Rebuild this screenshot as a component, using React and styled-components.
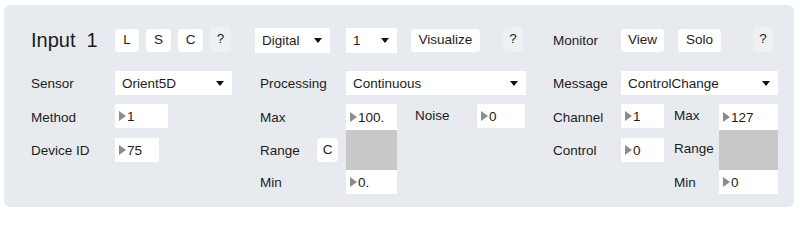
import React from "react";
import styled, { createGlobalStyle } from "styled-components";

const GlobalStyle = createGlobalStyle`
  body {
    margin: 0;
    background: #ffffff;
    font-family: "Liberation Sans", Arial, sans-serif;
  }
`;

const App = () => {
  return (
    <>
      <GlobalStyle />
      <Panel>
        <Column $width={201} $gap={28}>
          <Header>
            <Title $width={84}>
              Input<Num>1</Num>
            </Title>
            <Button $w={24}>L</Button>
            <Button $w={25} $ml={7}>S</Button>
            <Button $w={25} $ml={7}>C</Button>
            <Help $ml={7} $w={21}>?</Help>
          </Header>
          <FieldRow>
            <Label $width={84}>Sensor</Label>
            <Dropdown $w={117}>Orient5D</Dropdown>
          </FieldRow>
          <Body $cols="84px 53px">
            <Label>Method</Label>
            <NumberBox $w={53}>1</NumberBox>
            <Label>Device ID</Label>
            <NumberBox $w={44} $center>75</NumberBox>
          </Body>
        </Column>

        <Column $width={266} $gap={27}>
          <Header $shift={-5}>
            <Dropdown $w={75} $h={25}>Digital</Dropdown>
            <Dropdown $w={51} $h={25} $ml={16}>1</Dropdown>
            <Button $w={69} $ml={14}>Visualize</Button>
            <Help $w={20} $ml={23}>?</Help>
          </Header>
          <FieldRow>
            <Label $width={86}>Processing</Label>
            <Dropdown $w={180}>Continuous</Dropdown>
          </FieldRow>
          <Body $cols="57px 29px 51px 18px 62px 48px">
            <Label $col={1}>Max</Label>
            <NumberBox $col={3} $h={26}>100.</NumberBox>
            <Label $col={5} $up>Noise</Label>
            <NumberBox $col={6}>0</NumberBox>
            <Label $col={1}>Range</Label>
            <Button $col={2} $w={21} $h={24}>C</Button>
            <RangeFill $col={3} />
            <Label $col={1}>Min</Label>
            <NumberBox $col={3}>0.</NumberBox>
          </Body>
        </Column>

        <Column $width={225}>
          <Header>
            <Label $width={68}>Monitor</Label>
            <Button $w={43}>View</Button>
            <Button $w={43} $ml={14}>Solo</Button>
            <Help $w={20} $ml={32}>?</Help>
          </Header>
          <FieldRow>
            <Label $width={68}>Message</Label>
            <Dropdown $w={157}>ControlChange</Dropdown>
          </FieldRow>
          <Body $cols="68px 43px 10px 45px 59px">
            <Label $col={1}>Channel</Label>
            <NumberBox $col={2}>1</NumberBox>
            <Label $col={4} $up>Max</Label>
            <NumberBox $col={5} $h={26}>127</NumberBox>
            <Label $col={1}>Control</Label>
            <NumberBox $col={2} $center>0</NumberBox>
            <Label $col={4} $up>Range</Label>
            <RangeFill $col={5} />
            <Label $col={4}>Min</Label>
            <NumberBox $col={5}>0</NumberBox>
          </Body>
        </Column>
      </Panel>
    </>
  );
};

export default App;

const Panel = styled.div`
  box-sizing: border-box;
  display: flex;
  align-items: flex-start;
  width: 790px;
  height: 202px;
  margin: 5px 0 0 4px;
  padding: 23px 0 0 27px;
  background: #e7ebef;
  border-radius: 6px;
  color: #1c1c1c;
  font-size: 13.5px;
`;

const Column = styled.div`
  display: flex;
  flex-direction: column;
  width: ${(p) => p.$width}px;
  margin-right: ${(p) => p.$gap || 0}px;
`;

const Header = styled.div`
  display: flex;
  align-items: center;
  height: 24px;
  margin: 0 0 19px ${(p) => p.$shift || 0}px;
`;

const Title = styled.div`
  width: ${(p) => p.$width}px;
  font-size: 20px;
  line-height: 24px;
  color: #1a1a1a;
`;

const Num = styled.span`
  margin-left: 11px;
`;

const Button = styled.div`
  box-sizing: border-box;
  display: flex;
  align-items: center;
  justify-content: center;
  grid-column: ${(p) => p.$col || "auto"};
  align-self: center;
  width: ${(p) => p.$w}px;
  height: ${(p) => p.$h || 23}px;
  margin-left: ${(p) => p.$ml || 0}px;
  background: #ffffff;
  border-radius: 4px;
  line-height: 1;
`;

const Help = styled(Button)`
  height: 25px;
  margin-top: -2px;
  background: #eef1f4;
`;

const Label = styled.div`
  grid-column: ${(p) => p.$col || "auto"};
  align-self: center;
  width: ${(p) => (p.$width ? `${p.$width}px` : "auto")};
  margin-top: ${(p) => (p.$up ? "-4px" : "0")};
  flex-shrink: 0;
  white-space: nowrap;
`;

const FieldRow = styled.div`
  display: flex;
  align-items: center;
  height: 24px;
  margin-bottom: 9px;
`;

const Dropdown = styled.div`
  box-sizing: border-box;
  display: flex;
  align-items: center;
  justify-content: space-between;
  width: ${(p) => p.$w}px;
  height: ${(p) => p.$h || 24}px;
  margin-left: ${(p) => p.$ml || 0}px;
  padding: 0 8px 0 7px;
  background: #ffffff;
  white-space: nowrap;

  &::after {
    content: "";
    border-top: 5px solid #111111;
    border-left: 4.5px solid transparent;
    border-right: 4.5px solid transparent;
  }
`;

const Body = styled.div`
  display: grid;
  grid-template-columns: ${(p) => p.$cols};
  grid-template-rows: 26px 40px 24px;
`;

const NumberBox = styled.div`
  box-sizing: border-box;
  display: flex;
  align-items: center;
  grid-column: ${(p) => p.$col || "auto"};
  align-self: ${(p) => (p.$center ? "center" : "start")};
  width: ${(p) => (p.$w ? `${p.$w}px` : "auto")};
  height: ${(p) => p.$h || 24}px;
  padding-left: 4px;
  background: #ffffff;

  &::before {
    content: "";
    margin-right: 1px;
    border-left: 7px solid #8c8c8c;
    border-top: 5.5px solid transparent;
    border-bottom: 5.5px solid transparent;
  }
`;

const RangeFill = styled.div`
  grid-column: ${(p) => p.$col};
  background: #c8c8c8;
`;
